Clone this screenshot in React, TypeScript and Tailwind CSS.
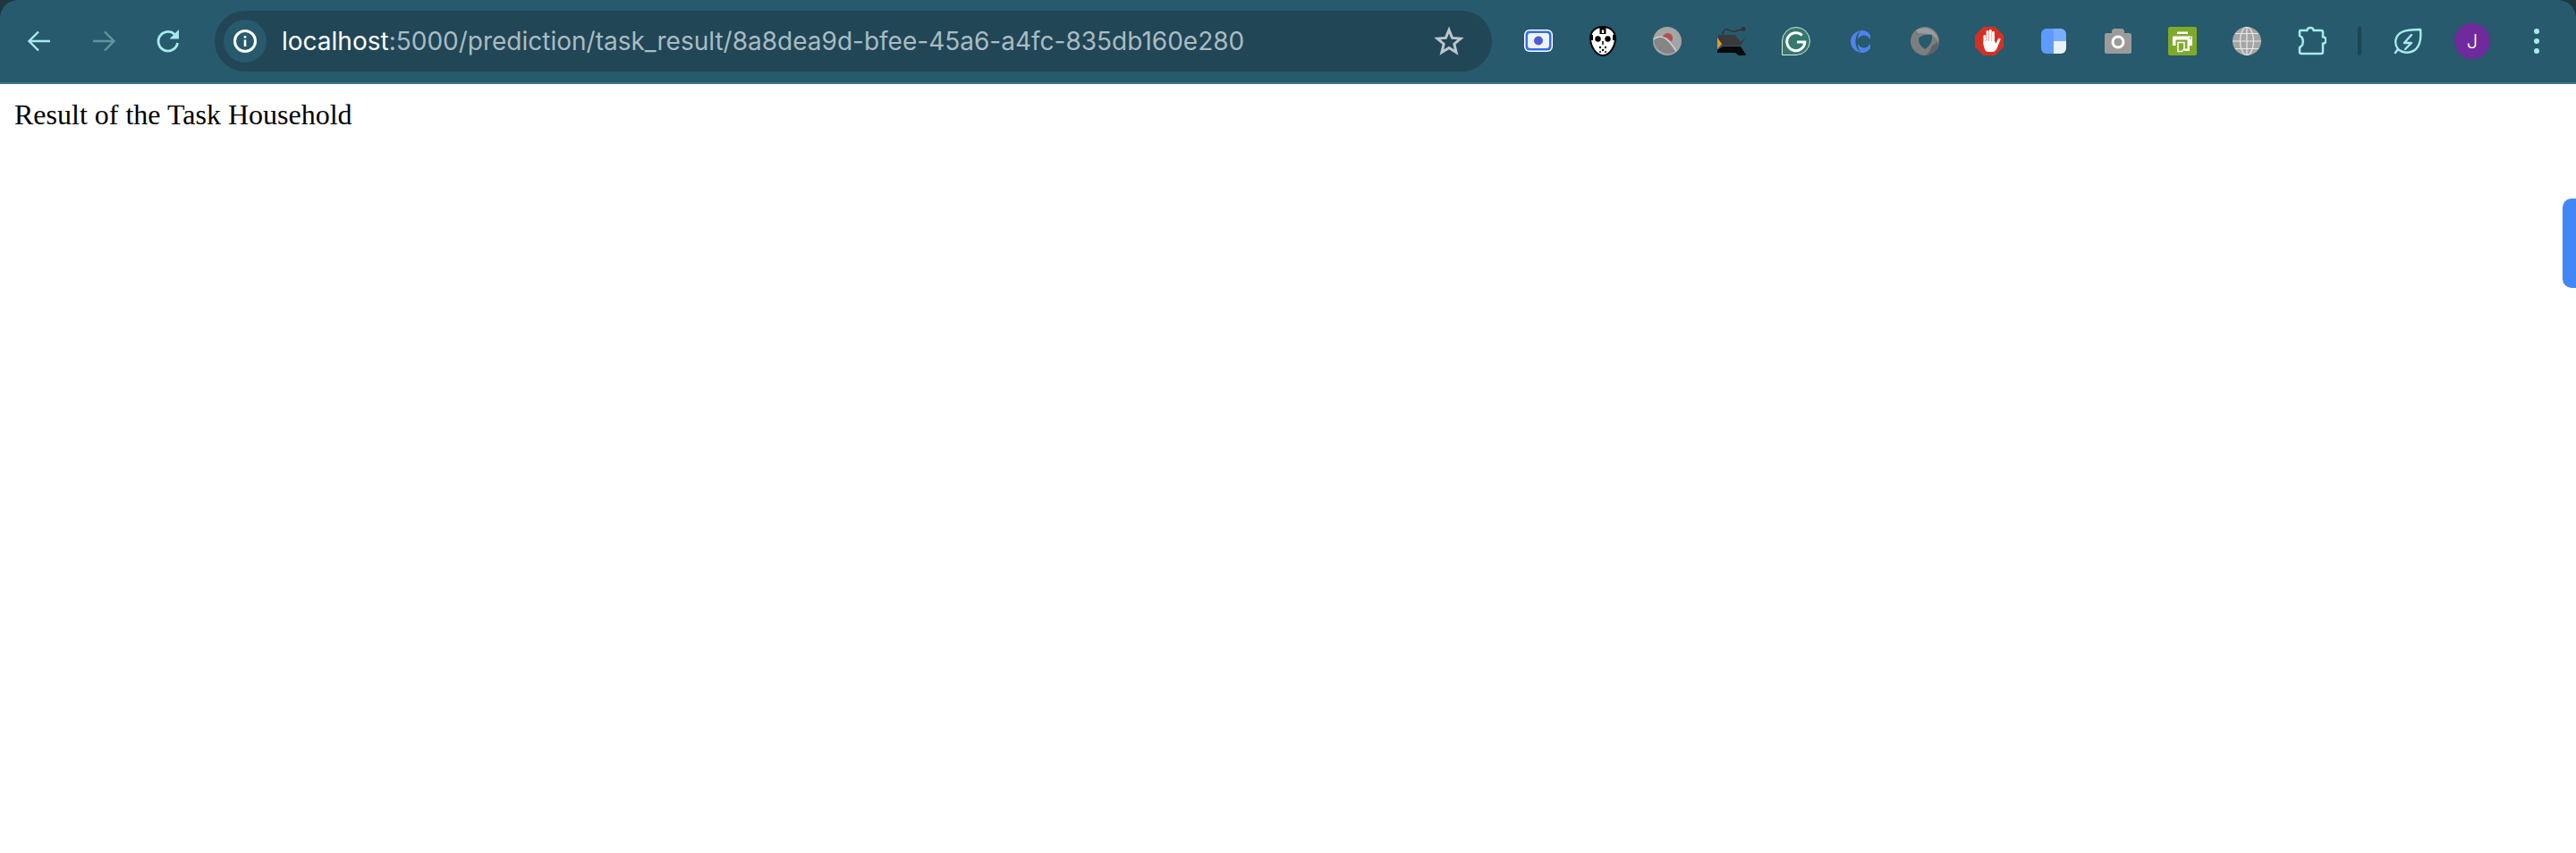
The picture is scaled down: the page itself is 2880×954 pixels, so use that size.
import type { ReactNode } from "react";

function BackIcon() {
  return (
    <svg viewBox="0 0 32 32" className="h-[32px] w-[32px] text-[#a8eaec]" fill="none" stroke="currentColor" strokeWidth="2.4">
      <path d="M28 16H6M15 5.500 4.500 16 15 26.500" />
    </svg>
  );
}

function ForwardIcon() {
  return (
    <svg viewBox="0 0 32 32" className="h-[32px] w-[32px] text-[#5f969f]" fill="none" stroke="currentColor" strokeWidth="2.4">
      <path d="M4 16h22M17 5.500 27.500 16 17 26.500" />
    </svg>
  );
}

function ReloadIcon() {
  return (
    <svg viewBox="0 0 32 32" className="h-[32px] w-[32px] text-[#a8eaec]" fill="none">
      <path d="M26.500 18a10.800 10.800 0 1 1-3.400-9.800" stroke="currentColor" strokeWidth="2.800" />
      <path d="M28 3v10.500H17.500z" fill="currentColor" />
    </svg>
  );
}

function CaptureIcon() {
  return (
    <svg viewBox="0 0 32 26" className="h-[26px] w-[32px]">
      <rect x="0" y="0" width="32" height="25" rx="6" fill="#fff" />
      <rect x="1.500" y="1.500" width="29" height="22" rx="4.500" fill="#2f6fed" />
      <rect x="4" y="4" width="24" height="17" rx="3" fill="#eef3ff" />
      <circle cx="16" cy="12.500" r="5" fill="#4d5fd0" />
    </svg>
  );
}

function MaskIcon() {
  return (
    <svg viewBox="0 0 30 34" className="h-[34px] w-[30px]">
      <path d="M15 1C7 1 1 6 1 14c0 8 6 19 14 19s14-11 14-19C29 6 23 1 15 1z" fill="#fff" stroke="#000" strokeWidth="2" />
      <circle cx="9.500" cy="14.500" r="3.200" fill="#000" />
      <circle cx="20.500" cy="14.500" r="3.200" fill="#000" />
      <path d="M11.500 2h7v7h-7z" fill="#000" />
      <path d="M13.800 4.500h2.400V8h-2.400z" fill="#fff" />
      <path d="M2 10h2v6H2zM26 10h2v6h-2z" fill="#000" />
      <path d="M15 17v4" stroke="#000" strokeWidth="1.500" />
      <circle cx="12" cy="24" r="1.200" fill="#000" />
      <circle cx="18" cy="24" r="1.200" fill="#000" />
      <circle cx="15" cy="27" r="1.200" fill="#000" />
      <circle cx="12" cy="29" r="1" fill="#000" />
      <circle cx="18" cy="29" r="1" fill="#000" />
    </svg>
  );
}

function BrainIcon() {
  return (
    <svg viewBox="0 0 32 32" className="h-[32px] w-[32px]">
      <circle cx="16" cy="16" r="16" fill="#a4a4a4" />
      <path d="M1 14C5 11 10 10 14 13c4 3 8 8 12 14a16 16 0 0 1-25-13z" fill="#858585" />
      <path d="M.5 14C5 11 10 10 14 13c4 3 8 8 12 14" fill="none" stroke="#d6d6d6" strokeWidth="1.400" />
      <path d="M11 11c.5-2 2-2 3-3.500 3-1.500 6 0 7.500 2.500 1.200 2.500.5 5-1.500 6.500C18 13.500 15 11.500 11 11z" fill="#b24f4c" />
    </svg>
  );
}

function KoalaIcon() {
  return (
    <svg viewBox="0 0 32 32" className="h-[32px] w-[32px]">
      <path d="M6 9c0-4 2-7 5-6 3 1 6 3 9 2 3-.5 5-1.500 7-2" fill="none" stroke="#333" strokeWidth="1.500" />
      <circle cx="29" cy="2.500" r="2.500" fill="#333" />
      <path d="M1 9h19l6 8 6-6-6 10H6L1 15z" fill="#3a3a3a" />
      <path d="M6 22h20l6 9-1 1h-7l-4-3H0v-3z" fill="#0a0a0a" />
      <path d="M0 12l5 7-5 6z" fill="#f2952b" />
    </svg>
  );
}

function GrammarlyIcon() {
  return (
    <svg viewBox="0 0 32 32" className="h-[32px] w-[32px]">
      <path d="M16 .5A15.500 15.500 0 1 1 16 31.500H.5V16A15.500 15.500 0 0 1 16 .5z" fill="#34796c" stroke="#d7e4e1" strokeWidth="1" />
      <path d="M22.800 9.500a10 10 0 1 0 3 7.500H17" fill="none" stroke="#fff" strokeWidth="3" />
    </svg>
  );
}

function CopilotIcon() {
  return (
    <svg viewBox="0 0 22 25" className="h-[25px] w-[22px]">
      <path d="M12 0C5 1 0 6 0 12.500S5 24 12 25c-5-3-6.500-8-6.500-12.500S7 3 12 0z" fill="#4f83ea" />
      <path d="M12 0c5 0 8 2 10 5v5c-2-3-5-5-8-4.500C11 6 9 8 8 10c0-4 1.500-8 4-10zM12 25c5 0 8-2 10-5v-5c-2 3-5 5-8 4.500-3-.5-5-2.500-6-4.500 0 4 1.500 8 4 10z" fill="#4f83ea" />
    </svg>
  );
}

function RingIcon() {
  return (
    <svg viewBox="0 0 32 32" className="h-[32px] w-[32px]">
      <circle cx="16" cy="16" r="16" fill="#7b7d80" />
      <path d="M6 4c8-5 18-3 23 5 1 2 2 5 2 8-2-5-6-8-11-9-6-1-11 1-14-4z" fill="#9a9b9e" />
      <path d="M31 17c0 9-7 15-15 15 4-2 7-6 8-11 3-1 5-3 7-4z" fill="#5f6164" />
      <path d="M9.500 12c4-3 9-4 14.500-3 1 6-2 12-8 16-4-3-8-7-6.500-13z" fill="#265a6c" />
    </svg>
  );
}

function StopIcon() {
  return (
    <svg viewBox="0 0 32 32" className="h-[32px] w-[32px]">
      <path d="M9.500 0h13L32 9.500v13L22.500 32h-13L0 22.500v-13z" fill="#d63024" />
      <rect x="9.500" y="9" width="2.800" height="11" rx="1.400" fill="#fff" />
      <rect x="12.700" y="4" width="2.800" height="14" rx="1.400" fill="#fff" />
      <rect x="15.900" y="3" width="2.800" height="15" rx="1.400" fill="#fff" />
      <rect x="19.100" y="5" width="2.800" height="13" rx="1.400" fill="#fff" />
      <path d="M9.500 16H22l1.500 2.500 2.500-5c1-1.500 3-.5 2.500 1L25 23c-1 3-3 5-6 5h-3.500c-2.500 0-4-1-4.500-3l-1.500-5z" fill="#fff" />
    </svg>
  );
}

function TilesIcon() {
  return (
    <div className="grid h-[28px] w-[28px] grid-cols-2 grid-rows-2 overflow-hidden rounded-[6px]">
      <div className="row-span-2 bg-[#5f9bff]" />
      <div className="bg-[#7aacff]" />
      <div className="bg-[#e9f0ff]" />
    </div>
  );
}

function CameraIcon() {
  return (
    <svg viewBox="0 0 30 28" className="h-[28px] w-[30px]">
      <path d="M2 5h6V3c0-1.500 1-3 3-3h8c2 0 3 1.500 3 3v2h6c1 0 2 1 2 2v19c0 1-1 2-2 2H2c-1 0-2-1-2-2V7c0-1 1-2 2-2z" fill="#9b9b9b" />
      <circle cx="15" cy="15" r="6" fill="none" stroke="#fff" strokeWidth="3" />
    </svg>
  );
}

function PrinterIcon() {
  return (
    <svg viewBox="0 0 32 32" className="h-[32px] w-[32px]">
      <rect width="32" height="32" rx="2" fill="#7fa92b" />
      <path d="M10 5.500h12V8H10z" fill="#fff" />
      <path d="M6 10.500h20a1 1 0 0 1 1 1V21h-3v6h-6v-2.500h3.500v-10H8.500V21H5v-9.500a1 1 0 0 1 1-1z" fill="#fff" />
      <path d="M11 17.500h7v7l-2.500 3H11z" fill="none" stroke="#fff" strokeWidth="1.500" />
      <circle cx="25" cy="12.500" r="1" fill="#7fa92b" />
    </svg>
  );
}

function GlobeIcon() {
  return (
    <svg viewBox="0 0 32 32" className="h-[32px] w-[32px]">
      <circle cx="16" cy="16" r="16" fill="#a6a6a6" />
      <g fill="none" stroke="#e8e8e8" strokeWidth="1.200">
        <ellipse cx="16" cy="16" rx="7.500" ry="15.500" />
        <path d="M16 0v32M0 16h32M3 7.500h26M3 24.500h26" />
      </g>
    </svg>
  );
}

function PuzzleIcon() {
  return (
    <svg viewBox="0 0 34 34" className="h-[34px] w-[34px] text-[#a8eaec]">
      <path
        d="M5 5h7.500C12 1 20 1 19.500 5H28a2 2 0 0 1 2 2v5.500c4.500-1 4.500 8 0 7V29a2 2 0 0 1-2 2H6a2 2 0 0 1-2-2v-5c5-2 5-11 0-13V6a1 1 0 0 1 1-1z"
        fill="none"
        stroke="currentColor"
        strokeWidth="2.500"
        strokeLinejoin="round"
      />
    </svg>
  );
}

function LeafIcon() {
  return (
    <svg viewBox="0 0 32 32" className="h-[32px] w-[32px] text-[#a8eaec]" fill="none" stroke="currentColor" strokeWidth="2.400" strokeLinejoin="round" strokeLinecap="round">
      <path d="M5 25C0 18 2 10 9 6c6-3 14-3 21-3 1 9 0 17-5 22-6 5-14 5-20 0z" />
      <path d="M5 25l-3 4" />
      <path d="M20 9l-8 9h8l-7 7" />
    </svg>
  );
}

function InfoIcon() {
  return (
    <svg viewBox="0 0 28 28" className="h-[28px] w-[28px] text-white">
      <circle cx="14" cy="14" r="11.500" fill="none" stroke="currentColor" strokeWidth="3" />
      <rect x="12.700" y="12.500" width="2.600" height="7.500" fill="currentColor" />
      <rect x="12.700" y="8" width="2.600" height="2.600" fill="currentColor" />
    </svg>
  );
}

function StarIcon() {
  return (
    <svg viewBox="0 0 34 34" className="h-[34px] w-[34px] text-[#bcc6ca]">
      <path d="M17 4.500l3.600 8.900 9.400.7-7.200 6.100 2.300 9.300-8.100-5-8.100 5 2.300-9.300L4 14.100l9.400-.7z" fill="none" stroke="currentColor" strokeWidth="3" strokeLinejoin="miter" />
    </svg>
  );
}

const extensions = [
  CaptureIcon,
  MaskIcon,
  BrainIcon,
  KoalaIcon,
  GrammarlyIcon,
  CopilotIcon,
  RingIcon,
  StopIcon,
  TilesIcon,
  CameraIcon,
  PrinterIcon,
  GlobeIcon,
  PuzzleIcon,
];

function Slot({ children }: { children: ReactNode }) {
  return <div className="flex h-[72px] w-[72px] shrink-0 items-center justify-center">{children}</div>;
}

export default function App() {
  return (
    <div className="min-h-[954px] bg-white">
      <header className="bg-[#1d3640]">
        <div className="flex h-[94px] items-center rounded-t-[20px] border-b-2 border-[#3d7585] bg-[#265a6c] px-2">
          <Slot><BackIcon /></Slot>
          <Slot><ForwardIcon /></Slot>
          <Slot><ReloadIcon /></Slot>
          <div className="ml-4 flex h-[68px] w-[1428px] shrink-0 items-center rounded-full bg-[#214655] pl-[10px] pr-[31px]">
            <div className="flex h-[48px] w-[48px] items-center justify-center rounded-full bg-[#265a6c]">
              <InfoIcon />
            </div>
            <div className="ml-[17px] flex-1 font-['Inter',sans-serif] text-[28px] leading-none text-[#a9bcc3]">
              <span className="text-white">localhost</span>:5000/prediction/task_result/8a8dea9d-bfee-45a6-a4fc-835db160e280
            </div>
            <StarIcon />
          </div>
          <div className="ml-4 flex">
            {extensions.map((Icon, i) => (
              <Slot key={i}><Icon /></Slot>
            ))}
          </div>
          <div className="flex w-[36px] justify-center">
            <div className="h-[32px] w-[4px] rounded-full bg-[#1c4452]" />
          </div>
          <Slot><LeafIcon /></Slot>
          <Slot>
            <div className="flex h-[40px] w-[40px] items-center justify-center rounded-full bg-[#6f2a9b] font-['Inter',sans-serif] text-[22px] font-light text-white">
              J
            </div>
          </Slot>
          <Slot>
            <div className="flex flex-col gap-[5px]">
              <div className="h-[6px] w-[6px] rounded-full bg-[#a8eaec]" />
              <div className="h-[6px] w-[6px] rounded-full bg-[#a8eaec]" />
              <div className="h-[6px] w-[6px] rounded-full bg-[#a8eaec]" />
            </div>
          </Slot>
        </div>
      </header>
      <main className="px-4 pt-4 font-['Liberation_Serif',serif] text-[32px] leading-[37px] text-black">
        Result of the Task Household
      </main>
      <div className="absolute right-0 top-[222px] h-[100px] w-[15px] rounded-l-[10px] bg-[#4187f5]" />
    </div>
  );
}
